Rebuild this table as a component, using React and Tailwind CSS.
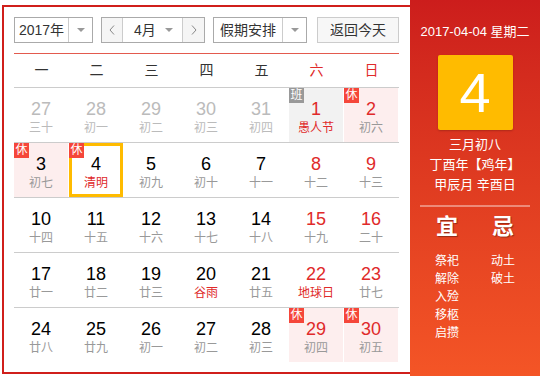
const FONT = "font-['Liberation_Sans','Noto_Sans_CJK_SC',sans-serif]";

const weeks = [
  [
    { d: 27, l: '三十', prev: true },
    { d: 28, l: '初一', prev: true },
    { d: 29, l: '初二', prev: true },
    { d: 30, l: '初三', prev: true },
    { d: 31, l: '初四', prev: true },
    { d: 1, l: '愚人节', red: true, fest: true, badge: '班' },
    { d: 2, l: '初六', red: true, badge: '休' },
  ],
  [
    { d: 3, l: '初七', badge: '休' },
    { d: 4, l: '清明', fest: true, badge: '休', today: true },
    { d: 5, l: '初九' },
    { d: 6, l: '初十' },
    { d: 7, l: '十一' },
    { d: 8, l: '十二', red: true },
    { d: 9, l: '十三', red: true },
  ],
  [
    { d: 10, l: '十四' },
    { d: 11, l: '十五' },
    { d: 12, l: '十六' },
    { d: 13, l: '十七' },
    { d: 14, l: '十八' },
    { d: 15, l: '十九', red: true },
    { d: 16, l: '二十', red: true },
  ],
  [
    { d: 17, l: '廿一' },
    { d: 18, l: '廿二' },
    { d: 19, l: '廿三' },
    { d: 20, l: '谷雨', fest: true },
    { d: 21, l: '廿五' },
    { d: 22, l: '地球日', red: true, fest: true },
    { d: 23, l: '廿七', red: true },
  ],
  [
    { d: 24, l: '廿八' },
    { d: 25, l: '廿九' },
    { d: 26, l: '初一' },
    { d: 27, l: '初二' },
    { d: 28, l: '初三' },
    { d: 29, l: '初四', red: true, badge: '休' },
    { d: 30, l: '初五', red: true, badge: '休' },
  ],
];

const Arrow = () => (
  <svg width="8" height="4" viewBox="0 0 8 4">
    <path d="M0 0 L8 0 L4 4 Z" fill="#999" />
  </svg>
);

const Chevron = ({ dir }) => (
  <svg width="6" height="10" viewBox="0 0 6 10">
    <polyline
      points={dir === 'left' ? '5,0.5 1,5 5,9.5' : '1,0.5 5,5 1,9.5'}
      fill="none"
      stroke="#888"
      strokeWidth="1"
    />
  </svg>
);

const Cell = ({ c }) => {
  let bg = 'bg-white';
  if (c.badge === '休' && !c.today) bg = 'bg-[#fdeeee]';
  if (c.badge === '班') bg = 'bg-[#f2f2f2]';

  const numColor = c.prev ? 'text-[#bbb]' : c.red ? 'text-[#e02a2a]' : 'text-black';
  const lunarColor = c.prev ? 'text-[#bbb]' : c.fest ? 'text-[#e02a2a]' : 'text-[#999]';

  return (
    <div
      className={`relative flex h-[54px] w-[54px] flex-col items-center ${bg} ${
        c.today ? 'border-[3px] border-[#ffbb00] pt-[8px]' : 'pt-[11px]'
      }`}
    >
      {c.badge && (
        <span
          className={`absolute ${c.today ? '-left-[3px] -top-[3px]' : 'left-0 top-0'} h-[15px] w-[15px] text-center text-[12px] leading-[15px] text-white ${
            c.badge === '班' ? 'bg-[#999]' : 'bg-[#f5463a]'
          }`}
        >
          {c.badge}
        </span>
      )}
      <span className={`text-[18px] leading-[20px] ${numColor}`}>{c.d}</span>
      <span className={`mt-[1px] text-[12px] leading-[16px] ${lunarColor}`}>{c.l}</span>
    </div>
  );
};

const App = () => {
  return (
    <div className={`flex h-[376px] w-[543px] items-start bg-white ${FONT}`}>
      <div className="ml-[2px] mt-[5px] h-[369px] w-[408px] border-2 border-r-0 border-[#d01f1b] pl-[10px] pt-[10px]">
        <div className="flex h-[26px] items-stretch text-[14px] text-[#333]">
          <div className="flex w-[79px] border border-[#aaa]">
            <div className="flex w-[54px] items-center justify-center border-r border-[#ccc]">2017年</div>
            <div className="flex flex-1 items-center justify-center">
              <Arrow />
            </div>
          </div>
          <div className="ml-[8px] flex w-[104px] border border-[#aaa]">
            <div className="flex w-[21px] items-center justify-center border-r border-[#ccc] bg-[#f5f5f5]">
              <Chevron dir="left" />
            </div>
            <div className="flex w-[60px] items-center justify-between border-r border-[#ccc] pl-[11px] pr-[9px]">
              <span>4月</span>
              <Arrow />
            </div>
            <div className="flex flex-1 items-center justify-center bg-[#f5f5f5]">
              <Chevron dir="right" />
            </div>
          </div>
          <div className="ml-[8px] flex w-[94px] border border-[#aaa]">
            <div className="flex w-[69px] items-center justify-center border-r border-[#ccc]">假期安排</div>
            <div className="flex flex-1 items-center justify-center">
              <Arrow />
            </div>
          </div>
          <div className="ml-[10px] flex w-[82px] items-center justify-center border border-[#ccc] bg-[#f7f7f7]">
            返回今天
          </div>
        </div>

        <div className="mt-[10px] w-[385px]">
          <div className="grid h-[35px] grid-cols-7 border-y border-b-[#ccc] border-t-[#e35a4e] text-[14px]">
            {['一', '二', '三', '四', '五', '六', '日'].map((w, i) => (
              <div
                key={w}
                className={`flex items-center justify-center ${i > 4 ? 'text-[#e02a2a]' : 'text-[#333]'}`}
              >
                {w}
              </div>
            ))}
          </div>
          {weeks.map((week, wi) => (
            <div
              key={wi}
              className={`grid grid-cols-7 ${wi < weeks.length - 1 ? 'h-[55px] border-b border-[#ccc]' : 'h-[54px]'}`}
            >
              {week.map((c, ci) => (
                <Cell key={ci} c={c} />
              ))}
            </div>
          ))}
        </div>
      </div>

      <div className="flex h-[376px] w-[130px] flex-col items-center bg-linear-to-b from-[#cc1d1c] to-[#f45526] text-white">
        <div className="mt-[23px] text-[13px] leading-[18px]">2017-04-04 星期二</div>
        <div className="mt-[14px] flex h-[75px] w-[75px] items-center justify-center rounded-[2px] bg-[#ffbb00] text-[56px] leading-none shadow-[0_1px_2px_rgba(0,0,0,0.2)]">
          4
        </div>
        <div className="mt-[5px] flex flex-col items-center text-[13px] leading-[20px]">
          <span>三月初八</span>
          <span>丁酉年【鸡年】</span>
          <span>甲辰月 辛酉日</span>
        </div>
        <div className="mt-[10px] h-[2px] w-[110px] bg-white/40" />
        <div className="mt-[7px] flex gap-[16px]">
          <div className="flex w-[40px] flex-col items-center">
            <span className="text-[22px] font-bold leading-[26px] [text-shadow:1px_1px_1px_rgba(0,0,0,0.35)]">宜</span>
            <div className="mt-[12px] flex flex-col items-center text-[12px] leading-[18px]">
              <span>祭祀</span>
              <span>解除</span>
              <span>入殓</span>
              <span>移柩</span>
              <span>启攒</span>
            </div>
          </div>
          <div className="flex w-[40px] flex-col items-center">
            <span className="text-[22px] font-bold leading-[26px] [text-shadow:1px_1px_1px_rgba(0,0,0,0.35)]">忌</span>
            <div className="mt-[12px] flex flex-col items-center text-[12px] leading-[18px]">
              <span>动土</span>
              <span>破土</span>
            </div>
          </div>
        </div>
      </div>
    </div>
  );
};

export default App;
